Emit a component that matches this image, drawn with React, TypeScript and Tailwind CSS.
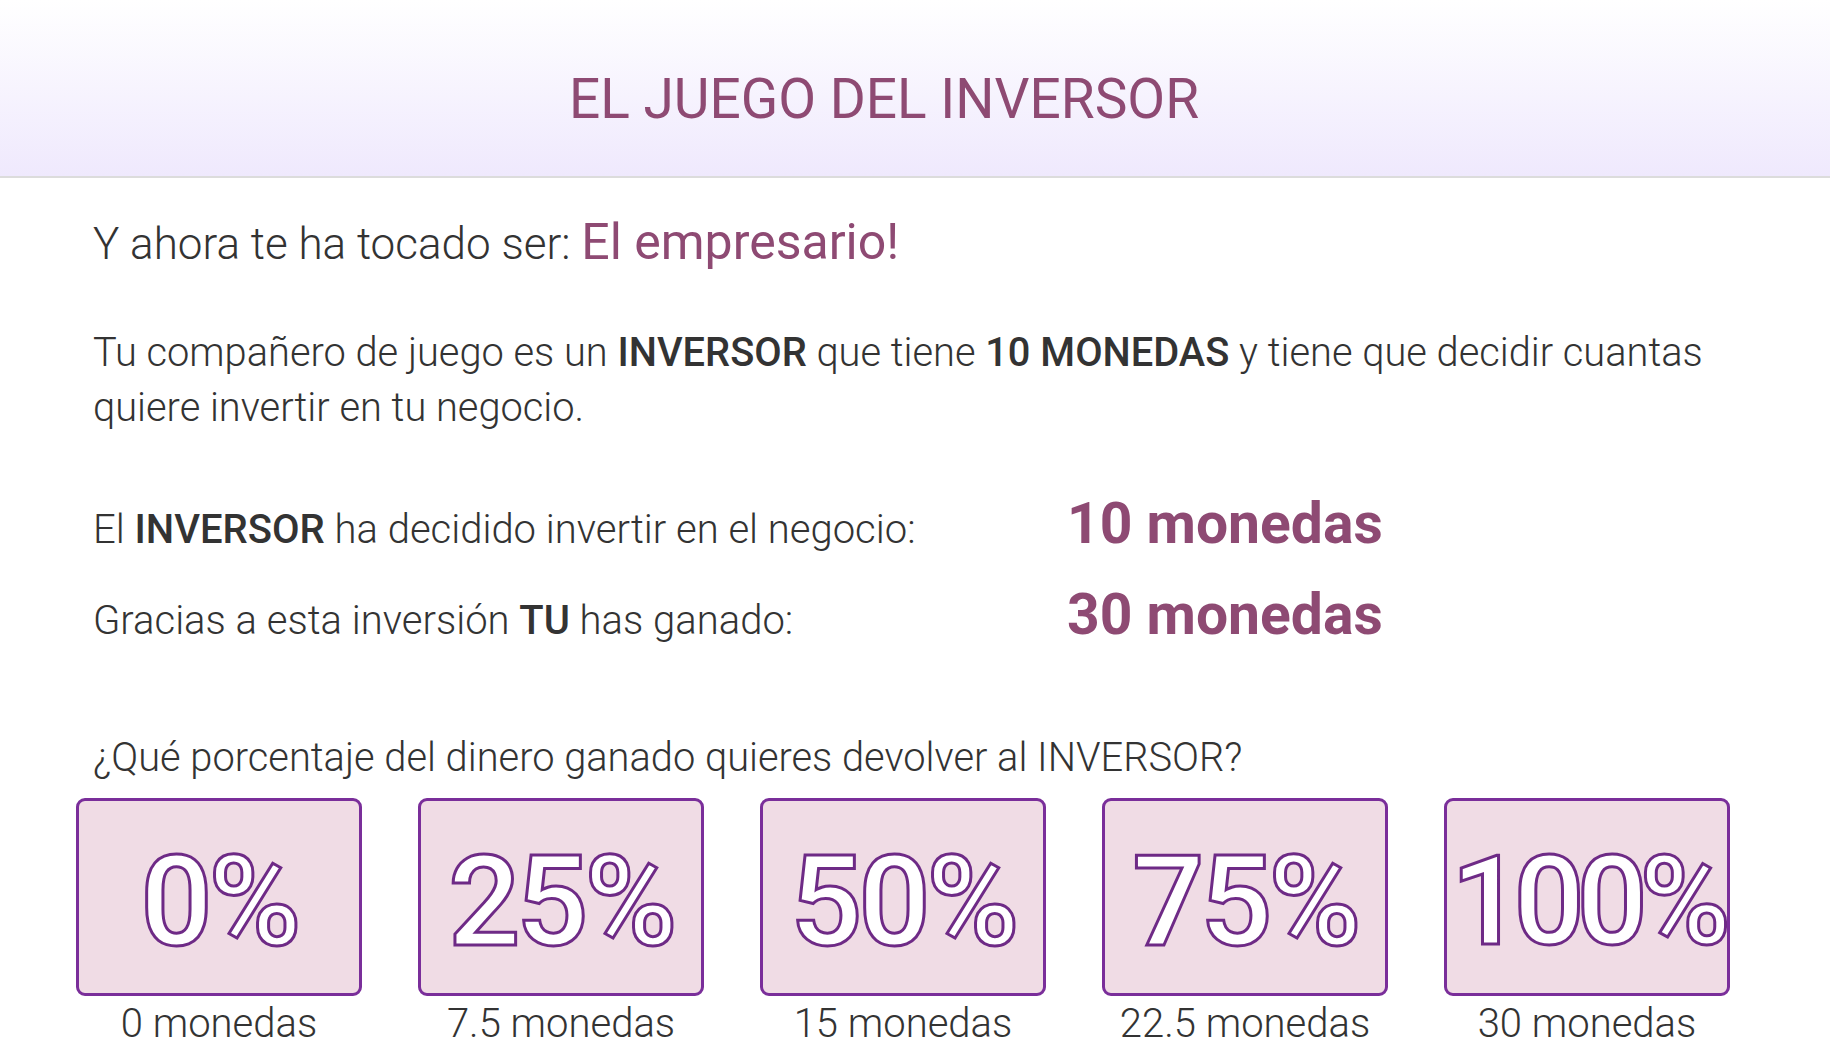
const options = [
  { pct: '0%', coins: '0 monedas', tight: false },
  { pct: '25%', coins: '7.5 monedas', tight: false },
  { pct: '50%', coins: '15 monedas', tight: false },
  { pct: '75%', coins: '22.5 monedas', tight: false },
  { pct: '100%', coins: '30 monedas', tight: true },
];

export default function App() {
  return (
    <div className="min-h-screen bg-white text-[#333] font-['Roboto',_'Liberation_Sans',_sans-serif]">
      {/* header */}
      <header className="h-[178px] border-b-2 border-[#dcdcdc] bg-gradient-to-b from-[#ffffff] to-[#efe9fd] pt-[67px] pr-[62px]">
        <h1 className="text-center text-[55px] leading-[64px] font-normal text-[#8e4a73]">EL JUEGO DEL INVERSOR</h1>
      </header>

      <main className="pl-[93px] pr-[60px]">
        <p className="mt-[38px] text-[44px] leading-[52px] font-light">
          Y ahora te ha tocado ser:{' '}
          <span className="text-[50px] font-normal text-[#8e4a73]">El empresario!</span>
        </p>

        <p className="mt-[55px] text-[39.8px] leading-[55px] font-light">
          Tu compañero de juego es un <span className="font-medium">INVERSOR</span> que tiene{' '}
          <span className="font-medium">10 MONEDAS</span> y tiene que decidir cuantas quiere invertir en tu negocio.
        </p>

        <div className="mt-[54px] flex h-[70px] items-baseline">
          <span className="w-[974px] text-[40px] font-light">
            El <span className="font-medium">INVERSOR</span> ha decidido invertir en el negocio:
          </span>
          <span className="text-[57px] leading-[70px] font-bold text-[#8e4a73]">10 monedas</span>
        </div>
        <div className="mt-[21px] flex h-[70px] items-baseline">
          <span className="w-[974px] text-[40px] font-light">
            Gracias a esta inversión <span className="font-medium">TU</span> has ganado:
          </span>
          <span className="text-[57px] leading-[70px] font-bold text-[#8e4a73]">30 monedas</span>
        </div>

        <p className="mt-[80px] text-[39.8px] leading-[55px] font-light">
          ¿Qué porcentaje del dinero ganado quieres devolver al INVERSOR?
        </p>
      </main>

      <div className="mt-[13px] ml-[76px] flex gap-[56px]">
        {options.map((o) => (
          <div key={o.pct} className="flex w-[286px] flex-col items-center">
            <button className="flex h-[198px] w-[286px] items-center justify-center overflow-hidden rounded-[9px] border-[3px] border-[#7a2e9a] bg-[#f0dce5]">
              <span
                className={
                  o.tight
                    ? 'mt-[10px] text-[124px] leading-none font-semibold tracking-[-8px] text-white [-webkit-text-stroke:3px_#6e2a86]'
                    : 'mt-[10px] text-[126px] leading-none font-semibold tracking-[-4px] text-white [-webkit-text-stroke:3px_#6e2a86]'
                }
              >
                {o.pct}
              </span>
            </button>
            <span className="mt-[4px] text-[40px] leading-[48px] font-light">{o.coins}</span>
          </div>
        ))}
      </div>
    </div>
  );
}
